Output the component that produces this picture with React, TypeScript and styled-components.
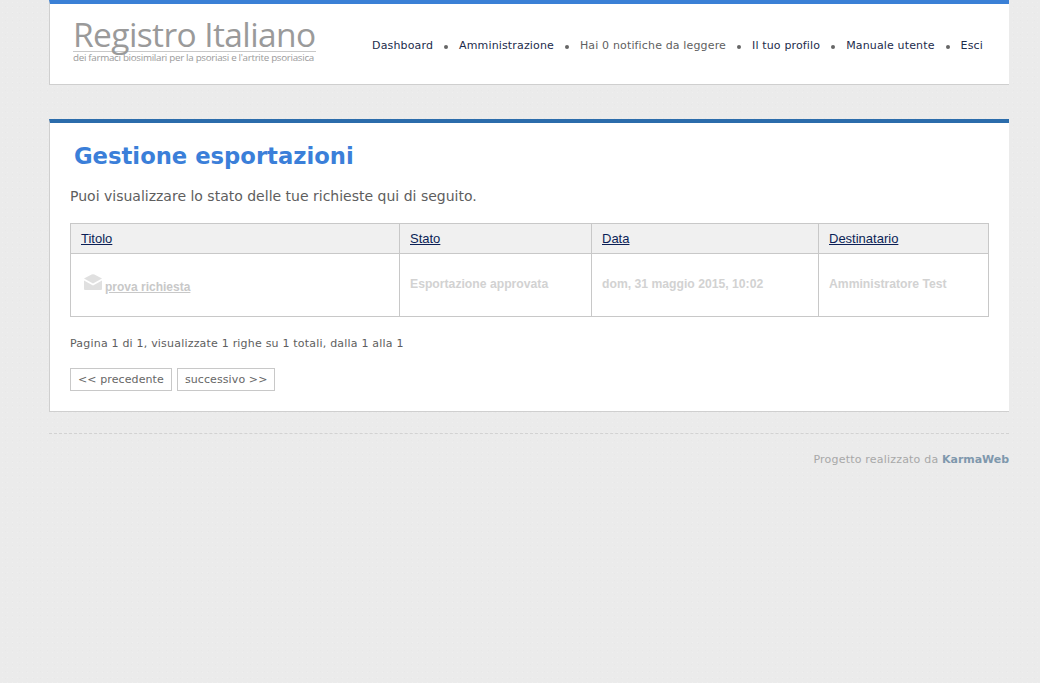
import React from "react";
import styled, { createGlobalStyle } from "styled-components";

const GlobalStyle = createGlobalStyle`
  html, body {
    margin: 0;
    padding: 0;
    height: 100%;
  }
  body {
    background-color: #ebebeb;
    background-image:
      radial-gradient(rgba(255,255,255,.18) .6px, transparent .8px),
      radial-gradient(rgba(0,0,0,.012) .6px, transparent .8px);
    background-size: 5px 5px, 7px 7px;
    background-position: 0 0, 2px 3px;
    font-family: "DejaVu Sans", Verdana, sans-serif;
    overflow: hidden;
  }
`;

const Wrapper = styled.div`
  width: 960px;
  margin-left: 49px;
`;

const Header = styled.header`
  box-sizing: border-box;
  height: 85px;
  background: #fff;
  border-top: 4px solid #3a80d6;
  border-bottom: 1px solid #cfcfcf;
  border-left: 1px solid #cfcfcf;
  display: flex;
  align-items: flex-start;
  justify-content: space-between;
  padding: 0 26px 0 23px;
`;

const Logo = styled.div`
  width: 243px;
  padding-top: 14px;
  font-family: "Open Sans", sans-serif;
  color: #9a9a9a;
`;

const LogoTitle = styled.div`
  font-size: 33.5px;
  font-weight: 400;
  line-height: 33px;
  letter-spacing: -0.6px;
  white-space: nowrap;
  border-bottom: 1px solid #c8c8c8;
`;

const LogoSub = styled.div`
  font-size: 9.8px;
  line-height: 12px;
  letter-spacing: -0.3px;
  white-space: nowrap;
`;

const Nav = styled.nav`
  display: flex;
  align-items: center;
  margin-top: 35px;
  font-size: 11px;
  line-height: 14px;
  letter-spacing: 0.15px;
`;

const NavItem = styled.a<{ $plain?: boolean }>`
  color: ${(p) => (p.$plain ? "#5f5f5f" : "#1c2c4c")};
  white-space: nowrap;
`;

const Dot = styled.span`
  width: 4px;
  height: 4px;
  border-radius: 50%;
  background: #666;
  margin: 1px 11px 0 11px;
`;

const Panel = styled.main`
  box-sizing: border-box;
  margin-top: 34px;
  height: 293px;
  background: #fff;
  border-top: 4px solid #2b6cab;
  border-bottom: 1px solid #cfcfcf;
  border-left: 1px solid #cfcfcf;
  padding: 0 20px;
`;

const Title = styled.h1`
  margin: 18px 0 0 4px;
  font-size: 22.7px;
  line-height: 30px;
  font-weight: 700;
  color: #3b7fd9;
`;

const Intro = styled.p`
  margin: 15px 0 0;
  font-size: 14px;
  line-height: 20px;
  color: #5e5e5e;
`;

const Table = styled.table`
  width: 918px;
  margin-top: 17px;
  border-collapse: collapse;
  table-layout: fixed;
  font-family: "Liberation Sans", Arial, sans-serif;
  font-size: 12.2px;
`;

const Th = styled.th<{ $width: number }>`
  box-sizing: border-box;
  width: ${(p) => p.$width}px;
  height: 30px;
  padding: 0 10px 1px;
  text-align: left;
  font-size: 13px;
  font-weight: 400;
  background: #f0f0f0;
  border: 1px solid #c8c8c8;
`;

const HeadLink = styled.a`
  color: #0b1f56;
  text-decoration: underline;
`;

const Td = styled.td`
  height: 63px;
  box-sizing: border-box;
  padding: 0 10px 2px;
  border: 1px solid #c8c8c8;
  color: #d2d2d2;
  font-weight: 700;
`;

const RowTitle = styled.a`
  display: inline-flex;
  align-items: flex-end;
  gap: 3px;
  margin-left: 3px;
  color: #c8c8c8;
`;

const RowLabel = styled.span`
  font-size: 12px;
  text-decoration: underline;
  line-height: 14px;
`;

const Envelope = styled.svg`
  display: block;
  margin-bottom: 4px;
`;

const PageInfo = styled.p`
  margin: 20px 0 0;
  font-size: 11px;
  line-height: 14px;
  letter-spacing: 0.2px;
  color: #5e5e5e;
`;

const Pager = styled.div`
  display: flex;
  gap: 5px;
  margin-top: 17px;
`;

const PagerButton = styled.a`
  box-sizing: border-box;
  height: 23px;
  padding: 0 7px;
  display: flex;
  align-items: center;
  background: #fff;
  border: 1px solid #c8c8c8;
  font-size: 11px;
  letter-spacing: 0.1px;
  color: #666;
  white-space: nowrap;
`;

const Footer = styled.footer`
  margin-top: 21px;
  border-top: 1px dashed #d2d2d2;
  padding-top: 19px;
  text-align: right;
  font-size: 11px;
  line-height: 14px;
  letter-spacing: 0.2px;
  color: #a8a8a8;
`;

const FooterLink = styled.a`
  color: #7f98ad;
  font-weight: 700;
  letter-spacing: -0.05px;
`;

const navItems = [
  { label: "Dashboard" },
  { label: "Amministrazione" },
  { label: "Hai 0 notifiche da leggere", plain: true },
  { label: "Il tuo profilo" },
  { label: "Manuale utente" },
  { label: "Esci" },
];

const columns = [
  { label: "Titolo", width: 329 },
  { label: "Stato", width: 192 },
  { label: "Data", width: 227 },
  { label: "Destinatario", width: 170 },
];

export default function App() {
  return (
    <Wrapper>
      <GlobalStyle />
      <Header>
        <Logo>
          <LogoTitle>Registro Italiano</LogoTitle>
          <LogoSub>dei farmaci biosimilari per la psoriasi e l'artrite psoriasica</LogoSub>
        </Logo>
        <Nav>
          {navItems.map((item, i) => (
            <React.Fragment key={item.label}>
              {i > 0 && <Dot />}
              <NavItem $plain={item.plain}>{item.label}</NavItem>
            </React.Fragment>
          ))}
        </Nav>
      </Header>

      <Panel>
        <Title>Gestione esportazioni</Title>
        <Intro>Puoi visualizzare lo stato delle tue richieste qui di seguito.</Intro>
        <Table>
          <thead>
            <tr>
              {columns.map((col) => (
                <Th key={col.label} $width={col.width}>
                  <HeadLink>{col.label}</HeadLink>
                </Th>
              ))}
            </tr>
          </thead>
          <tbody>
            <tr>
              <Td>
                <RowTitle>
                  <Envelope width="18" height="16" viewBox="0 0 18 16">
                    <path d="M0 4.5 7.6.5a3 3 0 0 1 2.8 0L18 4.5 9 9.5Z" fill="#e0e0e0" />
                    <path d="M0 6.5 9 11.5 18 6.5V15a1 1 0 0 1-1 1H1a1 1 0 0 1-1-1Z" fill="#e0e0e0" />
                  </Envelope>
                  <RowLabel>prova richiesta</RowLabel>
                </RowTitle>
              </Td>
              <Td>Esportazione approvata</Td>
              <Td>dom, 31 maggio 2015, 10:02</Td>
              <Td>Amministratore Test</Td>
            </tr>
          </tbody>
        </Table>
        <PageInfo>Pagina 1 di 1, visualizzate 1 righe su 1 totali, dalla 1 alla 1</PageInfo>
        <Pager>
          <PagerButton>&lt;&lt; precedente</PagerButton>
          <PagerButton>successivo &gt;&gt;</PagerButton>
        </Pager>
      </Panel>

      <Footer>
        Progetto realizzato da <FooterLink>KarmaWeb</FooterLink>
      </Footer>
    </Wrapper>
  );
}
